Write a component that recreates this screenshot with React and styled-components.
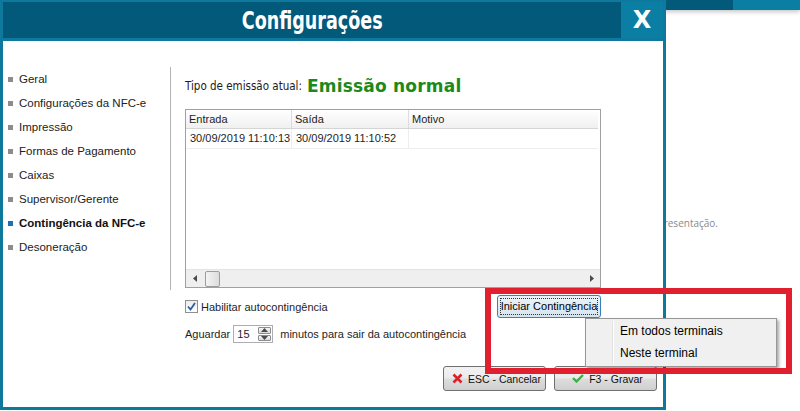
import styled, { createGlobalStyle } from "styled-components";

const colors = {
  titleDark: "#03597a",
  teal: "#0f799d",
  tealLight: "#0a7ea3",
  text: "#1e1e1e",
  green: "#1b8a1b",
  bulletGray: "#8c8c8c",
  bulletBlue: "#1f6fb6",
  border: "#a0a0a0",
  red: "#e0202e",
};

const GlobalStyle = createGlobalStyle`
  html, body {
    margin: 0;
    padding: 0;
    background: #fff;
  }
  body {
    overflow: hidden;
    font-family: "Liberation Sans", Arial, sans-serif;
    color: ${colors.text};
  }
`;

const Screen = styled.div`
  position: relative;
  width: 800px;
  height: 411px;
  overflow: hidden;
  background: #fff;
`;

/* page behind the dialog */
const BgHeader = styled.div`
  display: flex;
  height: 10px;
  box-shadow: 0 2px 4px rgba(0, 0, 0, 0.22);
`;

const BgHeaderPart = styled.div`
  flex: ${(p) => (p.$grow ? 1 : "none")};
  width: ${(p) => (p.$grow ? "auto" : "67px")};
  background: ${(p) => (p.$light ? colors.tealLight : colors.titleDark)};
`;

const BgBody = styled.div`
  padding: 206px 82px 0 0;
  text-align: right;
  font-family: "Open Sans", sans-serif;
  font-size: 10px;
  line-height: 14px;
  color: #8a8a8a;
`;

/* dialog window */
const Dialog = styled.div`
  position: absolute;
  top: 0;
  left: 0;
  width: 666px;
  height: 410px;
  box-sizing: border-box;
  border: 3px solid ${colors.teal};
  border-top-width: 2px;
  background: #fff;
  display: flex;
  flex-direction: column;
`;

const TitleBar = styled.div`
  display: flex;
  height: 36px;
  border-bottom: 3px solid ${colors.teal};
  background: ${colors.titleDark};
`;

const Title = styled.div`
  flex: 1;
  display: flex;
  align-items: center;
  justify-content: center;
  color: #fff;
  font-family: "DejaVu Sans Condensed", "DejaVu Sans", sans-serif;
  font-weight: bold;
  font-size: 25px;
  span {
    display: inline-block;
    transform: scaleX(0.78);
  }
`;

const CloseButton = styled.div`
  width: 42px;
  display: flex;
  align-items: center;
  justify-content: center;
  background: ${colors.tealLight};
  color: #fff;
  font-family: "DejaVu Sans", sans-serif;
  font-weight: bold;
  font-size: 24px;
`;

const Body = styled.div`
  flex: 1;
  display: flex;
  min-height: 0;
`;

const Sidebar = styled.ul`
  width: 168px;
  height: 223px;
  box-sizing: border-box;
  margin: 26px 0 0;
  padding: 0 0 0 5px;
  list-style: none;
  border-right: 1px solid #b4b4b4;
`;

const NavItem = styled.li`
  display: flex;
  align-items: center;
  gap: 6px;
  height: 24px;
  font-size: 11.5px;
  font-weight: ${(p) => (p.$active ? "bold" : "normal")};
  color: ${(p) => (p.$active ? "#111" : "#222")};
`;

const Bullet = styled.span`
  width: 5px;
  height: 5px;
  background: ${(p) => (p.$active ? colors.bulletBlue : colors.bulletGray)};
`;

const Main = styled.div`
  flex: 1;
  display: flex;
  flex-direction: column;
  padding: 35px 62px 0 14px;
`;

const Heading = styled.div`
  display: flex;
  align-items: center;
  height: 20px;
  font-family: "DejaVu Sans Condensed", "DejaVu Sans", sans-serif;
  font-size: 11.5px;
  color: #202020;
  white-space: nowrap;
`;

const Status = styled.span`
  margin-left: 5px;
  font-family: "DejaVu Sans", sans-serif;
  font-size: 17px;
  letter-spacing: 0.2px;
  color: ${colors.green};
  font-weight: bold;
`;

const Table = styled.div`
  margin-top: 13px;
  height: 179px;
  box-sizing: border-box;
  border: 1px solid ${colors.border};
  display: flex;
  flex-direction: column;
  font-size: 11px;
`;

const GridRow = styled.div`
  display: grid;
  grid-template-columns: 106px 117px 1fr;
  height: ${(p) => (p.$header ? "18px" : "19px")};
  background: ${(p) =>
    p.$header ? "linear-gradient(#ffffff, #f0f0f0)" : "#fff"};
  border-bottom: 1px solid ${(p) => (p.$header ? "#d5d5d5" : "#ededed")};
  margin-right: 2px;
`;

const Cell = styled.div`
  padding-left: ${(p) => (p.$header ? "3px" : "4px")};
  line-height: ${(p) => (p.$header ? "18px" : "19px")};
  border-right: 1px solid ${(p) => (p.$header ? "#dcdcdc" : "#eeeeee")};
  white-space: nowrap;
  &:last-child {
    border-right: none;
  }
`;

const TableFill = styled.div`
  flex: 1;
`;

const HScroll = styled.div`
  display: flex;
  align-items: center;
  height: 17px;
  background: #efefef;
  border-top: 1px solid #e4e4e4;
`;

const ScrollArrow = styled.div`
  width: 17px;
  height: 17px;
  display: flex;
  align-items: center;
  justify-content: center;
`;

const ScrollThumb = styled.div`
  width: 13px;
  height: 14px;
  margin-left: 2px;
  border: 1px solid #9c9c9c;
  border-radius: 2px;
  background: linear-gradient(90deg, #f4f4f4, #dcdcdc);
`;

const ScrollTrack = styled.div`
  flex: 1;
`;

const OptionsRow = styled.div`
  display: flex;
  align-items: center;
  justify-content: space-between;
  margin-top: 7px;
  height: 23px;
`;

const CheckLabel = styled.label`
  display: flex;
  align-items: center;
  gap: 3px;
  font-size: 11px;
  white-space: nowrap;
`;

const CheckBox = styled.span`
  width: 11px;
  height: 11px;
  border: 1px solid #8e8f8f;
  background: linear-gradient(#ececec, #ffffff);
  display: flex;
  align-items: center;
  justify-content: center;
`;

const MenuAnchor = styled.div`
  position: relative;
  z-index: 5;
`;

const ActionButton = styled.button`
  display: block;
  width: 104px;
  height: 23px;
  padding: 2px;
  border: 1px solid #3c7fb1;
  border-radius: 3px;
  background: linear-gradient(#eaf3f9, #d6e4ee);
  font-family: "Liberation Sans", Arial, sans-serif;
  font-size: 11px;
  color: #000;
  white-space: nowrap;
  span {
    display: block;
    height: 100%;
    line-height: 17px;
    outline: 1px dotted #333;
    outline-offset: -1px;
  }
`;

const Popup = styled.div`
  position: absolute;
  top: 100%;
  left: 88px;
  width: 192px;
  height: 49px;
  box-sizing: border-box;
  padding-top: 1px;
  background: #f0f0f0;
  border: 1px solid #979797;
  box-shadow: 2px 2px 3px rgba(0, 0, 0, 0.35);
  &::before {
    content: "";
    position: absolute;
    top: 2px;
    bottom: 2px;
    left: 26px;
    width: 1px;
    background: #e2e3e3;
    border-right: 1px solid #fff;
  }
`;

const MenuItem = styled.div`
  position: relative;
  height: 22px;
  line-height: 22px;
  padding-left: 34px;
  font-size: 12px;
  color: #000;
  white-space: nowrap;
`;

const WaitRow = styled.div`
  display: flex;
  align-items: center;
  margin-top: 7px;
  height: 18px;
  font-size: 11px;
  white-space: nowrap;
`;

const SpinBox = styled.div`
  display: flex;
  width: 40px;
  height: 18px;
  box-sizing: border-box;
  margin: 0 7px 0 3px;
  border: 1px solid #abadb3;
  background: #fff;
`;

const SpinValue = styled.div`
  flex: 1;
  padding-left: 3px;
  line-height: 16px;
`;

const SpinButtons = styled.div`
  width: 13px;
  display: flex;
  flex-direction: column;
  gap: 1px;
  padding: 1px 1px 1px 0;
`;

const SpinHalf = styled.div`
  flex: 1;
  display: flex;
  align-items: center;
  justify-content: center;
  border: 1px solid #8d8d8d;
  border-radius: 1px;
  background: linear-gradient(#f5f5f5, #d9d9d9);
`;

const Footer = styled.div`
  display: flex;
  justify-content: flex-end;
  gap: 8px;
  padding: 0 6px 16px 0;
`;

const FooterButton = styled.button`
  width: 103px;
  height: 25px;
  display: flex;
  align-items: center;
  justify-content: center;
  gap: 5px;
  padding: 0 0 0 4px;
  border: 1px solid #707070;
  border-radius: 3px;
  background: linear-gradient(#f2f2f2 0%, #ebebeb 48%, #dddddd 52%, #cfcfcf 100%);
  font-family: "Liberation Sans", Arial, sans-serif;
  font-size: 10.5px;
  color: #111;
  white-space: nowrap;
`;

const Annotation = styled.div`
  position: absolute;
  left: 485px;
  top: 288px;
  width: 307px;
  height: 86px;
  box-sizing: border-box;
  border: 6px solid ${colors.red};
  pointer-events: none;
  z-index: 10;
`;

const menu = [
  "Geral",
  "Configurações da NFC-e",
  "Impressão",
  "Formas de Pagamento",
  "Caixas",
  "Supervisor/Gerente",
  "Contingência da NFC-e",
  "Desoneração",
];

const Triangle = ({ dir }) => {
  const points = {
    left: "4,0 4,7 0,3.5",
    right: "0,0 0,7 4,3.5",
    up: "0,4 7,4 3.5,0",
    down: "0,0 7,0 3.5,4",
  }[dir];
  const vertical = dir === "up" || dir === "down";
  return (
    <svg width={vertical ? 7 : 4} height={vertical ? 4 : 7}>
      <polygon points={points} fill="#4a4a4a" />
    </svg>
  );
};

export default function App() {
  return (
    <Screen>
      <GlobalStyle />
      <BgHeader>
        <BgHeaderPart $grow />
        <BgHeaderPart $light />
      </BgHeader>
      <BgBody>Selecione uma opção no menu para alterar a apresentação.</BgBody>

      <Dialog>
        <TitleBar>
          <Title>
            <span>Configurações</span>
          </Title>
          <CloseButton>X</CloseButton>
        </TitleBar>
        <Body>
          <Sidebar>
            {menu.map((item) => {
              const active = item === "Contingência da NFC-e";
              return (
                <NavItem key={item} $active={active}>
                  <Bullet $active={active} />
                  {item}
                </NavItem>
              );
            })}
          </Sidebar>
          <Main>
            <Heading>
              Tipo de emissão atual:
              <Status>Emissão normal</Status>
            </Heading>
            <Table>
              <GridRow $header>
                <Cell $header>Entrada</Cell>
                <Cell $header>Saída</Cell>
                <Cell $header>Motivo</Cell>
              </GridRow>
              <GridRow>
                <Cell>30/09/2019 11:10:13</Cell>
                <Cell>30/09/2019 11:10:52</Cell>
                <Cell />
              </GridRow>
              <TableFill />
              <HScroll>
                <ScrollArrow>
                  <Triangle dir="left" />
                </ScrollArrow>
                <ScrollThumb />
                <ScrollTrack />
                <ScrollArrow>
                  <Triangle dir="right" />
                </ScrollArrow>
              </HScroll>
            </Table>
            <OptionsRow>
              <CheckLabel>
                <CheckBox>
                  <svg width="9" height="9" viewBox="0 0 9 9">
                    <path
                      d="M1 4.5 L3.5 7.5 L8 1"
                      fill="none"
                      stroke="#2a5ca8"
                      strokeWidth="1.8"
                    />
                  </svg>
                </CheckBox>
                Habilitar autocontingência
              </CheckLabel>
              <MenuAnchor>
                <ActionButton>
                  <span>Iniciar Contingência</span>
                </ActionButton>
                <Popup>
                  <MenuItem>Em todos terminais</MenuItem>
                  <MenuItem>Neste terminal</MenuItem>
                </Popup>
              </MenuAnchor>
            </OptionsRow>
            <WaitRow>
              Aguardar
              <SpinBox>
                <SpinValue>15</SpinValue>
                <SpinButtons>
                  <SpinHalf>
                    <Triangle dir="up" />
                  </SpinHalf>
                  <SpinHalf>
                    <Triangle dir="down" />
                  </SpinHalf>
                </SpinButtons>
              </SpinBox>
              minutos para sair da autocontingência
            </WaitRow>
          </Main>
        </Body>
        <Footer>
          <FooterButton>
            <svg width="11" height="11" viewBox="0 0 11 11">
              <path
                d="M1.5 1.5 L9.5 9.5 M9.5 1.5 L1.5 9.5"
                stroke="#d8232a"
                strokeWidth="2.6"
              />
            </svg>
            ESC - Cancelar
          </FooterButton>
          <FooterButton>
            <svg width="12" height="9" viewBox="0 0 12 9">
              <path
                d="M1 4 L4.5 7.5 L11 1"
                fill="none"
                stroke="#3fae49"
                strokeWidth="2.4"
              />
            </svg>
            F3 - Gravar
          </FooterButton>
        </Footer>
      </Dialog>
      <Annotation />
    </Screen>
  );
}
